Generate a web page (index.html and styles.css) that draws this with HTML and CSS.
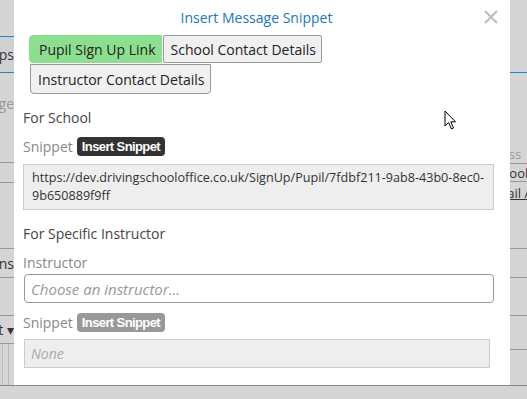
FILE: index.html
```html
<!DOCTYPE html>
<html lang="en">
<head>
    <meta charset="UTF-8">
    <meta name="viewport" content="width=device-width, initial-scale=1.0">
    <title>Insert Message Snippet</title>
    <link rel="stylesheet" href="styles.css">
</head>
<body>
    <div class="screen">
        <div class="side side-left">
            <div class="row" style="height: 36px"></div>
            <div class="row row-tab">Groups</div>
            <div class="row row-muted" style="height: 89px">Message</div>
            <div class="row row-line" style="height: 20px"></div>
            <div class="row row-line" style="height: 66px"></div>
            <div class="row row-line" style="height: 29px">Instructions</div>
            <div class="row row-line" style="height: 38px"></div>
            <div class="row row-line" style="height: 28px">Select ▾</div>
            <div class="row row-grid"></div>
        </div>

        <div class="modal">
            <div class="modal-head">
                <span class="modal-title">Insert Message Snippet</span>
                <svg class="close" width="14" height="14" viewBox="0 0 14 14">
                    <path d="M1 1 L13 13 M13 1 L1 13" stroke="#bbb" stroke-width="2"/>
                </svg>
            </div>

            <div class="tabs">
                <span class="tab tab-active">Pupil Sign Up Link</span>
                <span class="tab">School Contact Details</span>
                <span class="tab tab-second">Instructor Contact Details</span>
            </div>

            <div class="section-title">For School</div>
            <div class="snippet-row">
                <span class="label">Snippet</span>
                <span class="badge">Insert Snippet</span>
            </div>
            <div class="snippet-box">https://dev.drivingschooloffice.co.uk/SignUp/Pupil/7fdbf211-9ab8-43b0-8ec0-9b650889f9ff</div>

            <div class="section-title section-gap">For Specific Instructor</div>
            <div class="label label-block">Instructor</div>
            <div class="select">Choose an instructor...</div>
            <div class="snippet-row snippet-row-2">
                <span class="label">Snippet</span>
                <span class="badge badge-off">Insert Snippet</span>
            </div>
            <div class="none-box">None</div>

            <!-- mouse pointer -->
            <svg class="pointer" width="14" height="21" viewBox="0 0 14 21">
                <path d="M1 1 L1 16 L4.5 12.5 L7.5 19 L9.5 18 L6.8 11.8 L11.5 11.8 Z" fill="#fff" stroke="#000" stroke-width="1"/>
            </svg>
        </div>

        <div class="side side-right">
            <div class="row" style="height: 72px"></div>
            <div class="row row-blue" style="height: 72px"></div>
            <div class="row row-muted" style="height: 19px"><span class="shift-far">Address</span></div>
            <div class="row row-line" style="height: 18px"><span class="shift">School</span></div>
            <div class="row row-line row-link" style="height: 22px"><span class="shift">Email Address</span></div>
            <div class="row" style="height: 45px"></div>
            <div class="row row-line" style="height: 29px"></div>
            <div class="row row-line" style="height: 38px"></div>
            <div class="row row-line" style="height: 34px"></div>
            <div class="row row-line" style="height: 36px"></div>
        </div>
    </div>
    <div class="bottom"></div>
</body>
</html>
```

FILE: styles.css
```css
body {
    margin: 0;
    font-family: "Open Sans", "Liberation Sans", sans-serif;
    background: #d5d5d5;
    color: #333;
    overflow: hidden;
}
.screen {
    display: flex;
    height: 385px;
}

/* greyed page behind the dialog */
.side {
    background: #d5d5d5;
    overflow: hidden;
    display: flex;
    flex-direction: column;
}
.side-left { width: 14px; }
.side-right { width: 17px; }
.row {
    flex: none;
    box-sizing: border-box;
    display: flex;
    align-items: center;
    justify-content: flex-end;
    white-space: nowrap;
    font-size: 14px;
    color: #333;
}
.side-right .row {
    justify-content: flex-start;
    font-size: 13px;
}
.shift { margin-left: -22px; }
.shift-far { margin-left: -38px; }
.row-tab {
    height: 37px;
    border-top: 1px solid #1b88d0;
    border-bottom: 1px solid #1b88d0;
    background: #d0d0d0;
}
.row-blue { border-top: 1px solid #1b88d0; }
.row-muted { color: #999; }
.side-left .row-muted {
    align-items: flex-start;
    padding-top: 21px;
}
.row-line { border-top: 1px solid #999; }
.row-link span { text-decoration: underline; }
.row-grid {
    flex: 1;
    border-top: 1px solid #999;
    background: linear-gradient(90deg, transparent 2px, #bbb 2px, #bbb 3px, transparent 3px, transparent 8px, #bbb 8px, #bbb 9px, transparent 9px);
}

/* dialog */
.modal {
    position: relative;
    width: 496px;
    background: #fff;
    padding: 0 16px 0 9px;
    box-sizing: border-box;
}
.modal-head {
    height: 35px;
    display: flex;
    align-items: center;
    justify-content: center;
}
.modal-title {
    color: #1b75c3;
    font-size: 14px;
    margin-left: -4px;
}
.close {
    position: absolute;
    right: 12px;
    top: 10px;
}
.tabs {
    display: flex;
    flex-wrap: wrap;
    gap: 1px 1px;
    width: 300px;
    margin-left: 6px;
}
.tab {
    height: 28px;
    box-sizing: border-box;
    padding: 0 5px 0 7px;
    display: flex;
    align-items: center;
    font-size: 14px;
    color: #222;
    background: #f0f0f0;
    border: 1px solid #999;
    border-radius: 2px;
}
.tab-active {
    background: #8ddf90;
    border-color: #8ddf90;
    border-radius: 4px 0 0 4px;
    padding: 0 5px 0 9px;
}
.tab-second {
    height: 30px;
    margin-left: 1px;
    padding: 0 6px 0 7px;
    border-radius: 0 0 4px 4px;
}

.section-title {
    font-size: 14px;
    line-height: 20px;
    color: #444;
    margin-top: 14px;
}
.section-gap { margin-top: 14px; }
.label {
    font-size: 14px;
    color: #888;
}
.label-block {
    line-height: 18px;
    margin-top: 10px;
}
.snippet-row {
    display: flex;
    align-items: center;
    gap: 4px;
    height: 19px;
    margin-top: 9px;
}
.snippet-row-2 { margin-top: 10px; }
.badge {
    background: #333;
    color: #fff;
    font-family: "Liberation Sans Narrow", "Liberation Sans", sans-serif;
    font-weight: bold;
    font-size: 13px;
    letter-spacing: -0.6px;
    height: 19px;
    line-height: 19px;
    padding: 0 5px;
    border-radius: 4px;
}
.badge-off { background: #999; }
.snippet-box {
    margin-top: 8px;
    height: 46px;
    box-sizing: border-box;
    background: #eee;
    border: 1px solid #ccc;
    padding: 4px 8px;
    font-size: 12.6px;
    line-height: 18px;
    color: #333;
    overflow-wrap: break-word;
}
.select {
    margin: 2px 0 0 1px;
    height: 29px;
    box-sizing: border-box;
    border: 1px solid #999;
    border-radius: 4px;
    padding: 0 6px;
    display: flex;
    align-items: center;
    font-size: 15px;
    font-style: italic;
    color: #999;
}
.none-box {
    margin: 7px 4px 0 1px;
    height: 29px;
    box-sizing: border-box;
    background: #eee;
    border: 1px solid #ccc;
    padding: 0 6px;
    display: flex;
    align-items: center;
    font-size: 14px;
    font-style: italic;
    color: #aaa;
}
.pointer {
    position: absolute;
    left: 430px;
    top: 110px;
}
.bottom {
    height: 14px;
    border-top: 1px solid #888;
    background: #d5d5d5;
}
```
